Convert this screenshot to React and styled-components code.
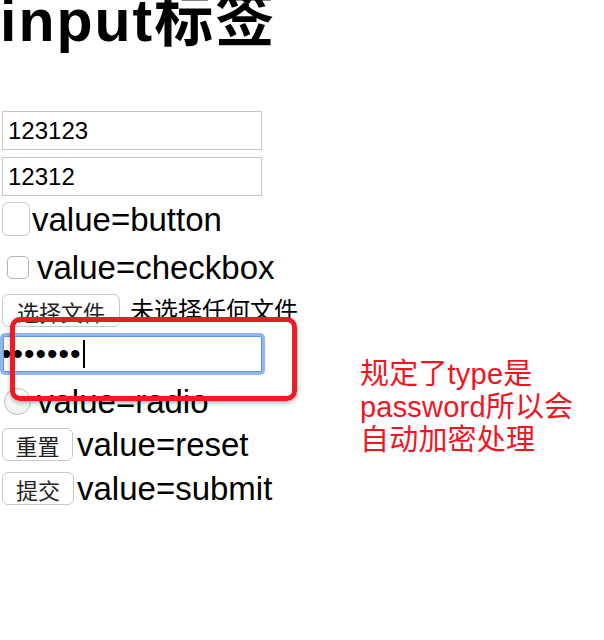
import React from "react";
import styled, { createGlobalStyle } from "styled-components";

const GlobalStyle = createGlobalStyle`
  body {
    margin: 0;
    background: #fff;
    color: #000;
    font-family: "Liberation Sans", "Noto Sans CJK SC", sans-serif;
  }
`;

const Page = styled.div`
  position: relative;
  width: 604px;
  height: 640px;
  overflow: hidden;
`;

const Title = styled.h1`
  margin: -8px 0 0 0;
  font-size: 59px;
  line-height: 58px;
  font-weight: 700;
  letter-spacing: 2px;
`;

const Form = styled.form`
  display: flex;
  flex-direction: column;
  align-items: flex-start;
  margin-top: 61px;
  padding-left: 2px;
`;

const Row = styled.div`
  display: flex;
  align-items: center;
  height: ${(p) => p.$h}px;
  margin-top: ${(p) => p.$mt || 0}px;
`;

const TextInput = styled.input`
  box-sizing: border-box;
  width: 260px;
  height: 39px;
  margin: 0;
  padding: 0 5px;
  border: 1px solid #c6c6c6;
  border-radius: 0;
  font-family: "Liberation Sans", sans-serif;
  font-size: 24px;
  color: #000;
  outline: none;
`;

const Label = styled.span`
  margin-left: ${(p) => p.$ml}px;
  font-size: ${(p) => p.$size || 33}px;
  line-height: 1;
  white-space: nowrap;
`;

const PlainButton = styled.button`
  box-sizing: border-box;
  width: ${(p) => p.$w}px;
  height: ${(p) => p.$h || 33}px;
  margin: 0;
  padding: 0;
  background: #fff;
  border: 1px solid #c9c9c9;
  border-radius: 6px;
  font-family: "Noto Sans CJK SC", sans-serif;
  font-size: 22px;
  color: #222;
  line-height: 1;
`;

const CheckBox = styled.input`
  appearance: none;
  box-sizing: border-box;
  width: 22px;
  height: 23px;
  margin: 0 0 0 5px;
  border: 1px solid #b3b3b3;
  border-radius: 5px;
  background: #fff;
`;

const Radio = styled.input`
  appearance: none;
  box-sizing: border-box;
  width: 27px;
  height: 27px;
  margin: 0 0 0 2px;
  border: 1px solid #b9b9b9;
  border-radius: 50%;
  background: linear-gradient(#fff, #f1f1f1);
`;

const PasswordField = styled.div`
  box-sizing: border-box;
  display: flex;
  align-items: center;
  width: 259px;
  height: 36px;
  margin-left: 1px;
  border: 1px solid #5d95ec;
  border-radius: 2px;
  box-shadow: 0 0 0 3px rgba(107, 157, 238, 0.75);
  background: #fff;
  overflow: hidden;
`;

const Dots = styled.span`
  margin-left: -3px;
  font-family: "Liberation Sans", sans-serif;
  font-size: 30px;
  letter-spacing: 1px;
  line-height: 1;
`;

const Caret = styled.span`
  width: 2px;
  height: 28px;
  margin-left: 1px;
  background: #000;
`;

const Highlight = styled.div`
  position: absolute;
  left: 10px;
  top: 317px;
  width: 287px;
  height: 84px;
  box-sizing: border-box;
  border: 5px solid #ee1a24;
  border-radius: 10px;
  box-shadow: 0 2px 4px rgba(0, 0, 0, 0.3);
`;

const Note = styled.div`
  position: absolute;
  left: 360px;
  top: 358px;
  color: #f2151f;
  font-size: 29px;
  line-height: 33px;
  letter-spacing: 0.2px;
`;

export default function App() {
  return (
    <Page>
      <GlobalStyle />
      <Title>input标签</Title>
      <Form onSubmit={(e) => e.preventDefault()}>
        <Row $h={39}>
          <TextInput type="text" defaultValue="123123" />
        </Row>
        <Row $h={39} $mt={7}>
          <TextInput type="text" defaultValue="12312" />
        </Row>
        <Row $h={34} $mt={6}>
          <PlainButton type="button" $w={28} $h={34} />
          <Label $ml={2}>value=button</Label>
        </Row>
        <Row $h={27} $mt={18}>
          <CheckBox type="checkbox" />
          <Label $ml={8}>value=checkbox</Label>
        </Row>
        <Row $h={33} $mt={13}>
          <PlainButton type="button" $w={118}>选择文件</PlainButton>
          <Label $ml={10} $size={24}>未选择任何文件</Label>
        </Row>
        <Row $h={36} $mt={9}>
          <PasswordField>
            <Dots>•••••••</Dots>
            <Caret />
          </PasswordField>
        </Row>
        <Row $h={31} $mt={14}>
          <Radio type="radio" name="r" />
          <Label $ml={6}>value=radio</Label>
        </Row>
        <Row $h={33} $mt={11}>
          <PlainButton type="reset" $w={71}>重置</PlainButton>
          <Label $ml={4}>value=reset</Label>
        </Row>
        <Row $h={33} $mt={11}>
          <PlainButton type="submit" $w={72}>提交</PlainButton>
          <Label $ml={3}>value=submit</Label>
        </Row>
      </Form>
      <Highlight />
      <Note>
        规定了type是
        <br />
        password所以会
        <br />
        自动加密处理
      </Note>
    </Page>
  );
}
